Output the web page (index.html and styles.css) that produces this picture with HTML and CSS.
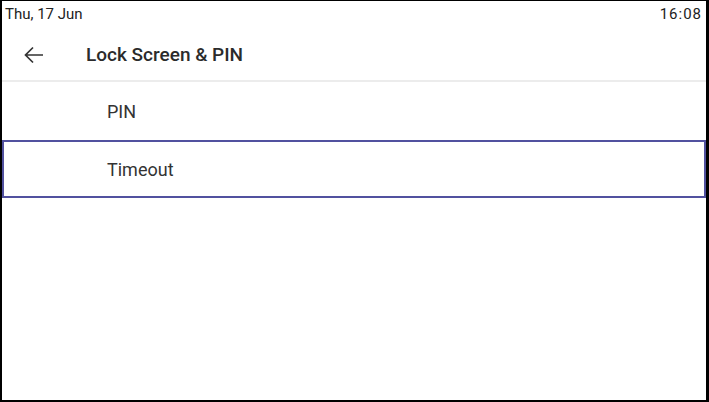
FILE: index.html
```html
<!DOCTYPE html>
<html lang="en">

<head>
    <meta charset="UTF-8">
    <meta name="viewport" content="width=device-width, initial-scale=1.0">
    <title>Lock Screen &amp; PIN</title>

    <link rel="stylesheet" href="styles.css">
</head>

<body>
    <div class="screen">
        <div class="status">
            <span>Thu, 17 Jun</span>
            <span class="time">16:08</span>
        </div>

        <div class="header">
            <button class="back" aria-label="Back">
                <svg width="24" height="24" viewBox="0 0 24 24">
                    <path d="M21 12H3.5M11 4.5l-7.5 7.5 7.5 7.5" fill="none" stroke="#333" stroke-width="1.7" />
                </svg>
            </button>
            <h1>Lock Screen &amp; PIN</h1>
        </div>

        <ul class="menu">
            <li>PIN</li>
            <li class="focused">Timeout</li>
        </ul>
    </div>
</body>

</html>
```

FILE: styles.css
```css
* {
    box-sizing: border-box;
    margin: 0;
    padding: 0;
}

html,
body {
    height: 100%;
    background-color: #000;
}

body {
    font-family: Roboto, "Liberation Sans", sans-serif;
    color: #333;
}

.screen {
    display: flex;
    flex-direction: column;
    margin: 1px 3px 2px 2px;
    height: 399px;
    background-color: #fff;
}

.status {
    display: flex;
    justify-content: space-between;
    height: 28px;
    padding: 5px 4px 0 3px;
    font-size: 15px;
    line-height: 17px;
    color: #222;
}

.status .time {
    letter-spacing: 1px;
}

.header {
    display: flex;
    align-items: center;
    height: 53px;
    border-bottom: 2px solid #ececec;
}

.back {
    display: flex;
    width: 24px;
    margin-left: 20px;
    margin-right: 40px;
    background: none;
    border: none;
}

.header h1 {
    font-size: 19px;
    font-weight: 500;
    color: #2b2b2b;
}

.menu {
    list-style-type: none;
}

.menu li {
    height: 58px;
    padding: 2px 0 0 105px;
    line-height: 56px;
    font-size: 18px;
    color: #333;
}

.menu li.focused {
    border: 2px solid #51519f;
    padding: 1px 0 0 103px;
    line-height: 53px;
}
```
